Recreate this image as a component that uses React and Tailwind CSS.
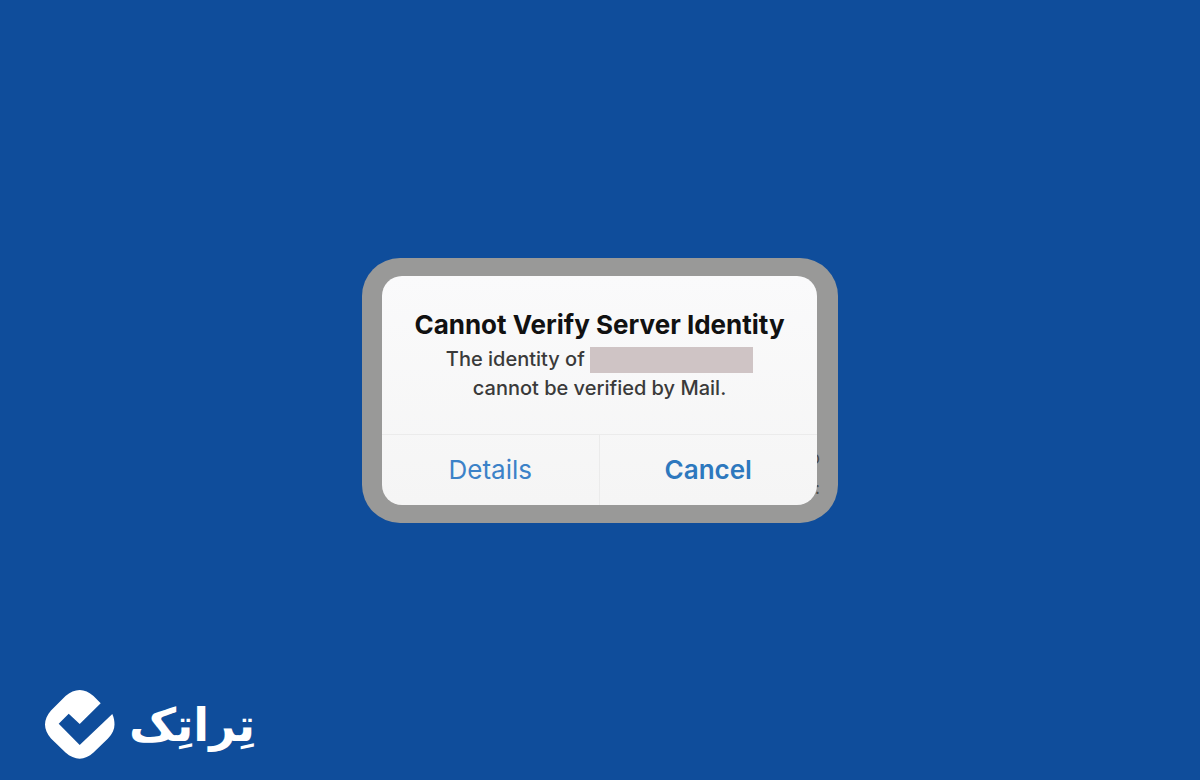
import React from 'react'

function LogoMark() {
    return (
        <svg viewBox="0 0 70 70" className="w-[70px] h-[70px]" fill="#ffffff" aria-hidden="true">
            <path d="M55.700 13.300L48.500 6C44 2 39.500 0 34.700 0C30 0 25 2 20.500 6L6 20.500C2 25 0 30 0 34.500C0 39 2 44 6 48.500L20.500 62.500C25 66.500 30 68.700 34.700 68.700C39.500 68.700 44 66.500 48.500 62.500L63 48.500C67.500 44 69.500 39 69.500 34.500C69.500 31 69 28 67.300 24L34.700 55L13.700 33.700L23.700 23.700L34.700 34Z" />
        </svg>
    )
}

function AlertDialog() {
    return (
        <div className="relative isolate w-full max-w-[476px] overflow-hidden rounded-[38px] bg-[#999998] py-[18px] pr-[21px] pl-5">
            {/* Text of the dimmed page that shows past the card */}
            <div className="absolute right-[18px] bottom-5 -z-10 flex flex-col text-right font-['Inter',sans-serif] text-[17px] leading-[30px] text-[#4b4b4b]" aria-hidden="true">
                <span>o</span>
                <span>:</span>
            </div>

            <div
                role="alertdialog"
                aria-labelledby="alert-title"
                aria-describedby="alert-text"
                className="overflow-hidden rounded-[20px] bg-linear-to-b from-[#fafafb] to-[#f5f5f5] text-center font-['Inter',sans-serif]"
            >
                <div className="px-4 py-[31px]">
                    <h1 id="alert-title" className="mb-0.5 text-[26px] leading-9 font-bold text-[#111111]">
                        Cannot Verify Server Identity
                    </h1>
                    <p id="alert-text" className="text-[20px] leading-[29px] font-medium text-[#3a3a3a]">
                        The identity of{' '}
                        <span className="inline-block h-[26px] w-[163px] bg-[#cfc4c5] align-middle" />
                        <br />
                        cannot be verified by Mail.
                    </p>
                </div>

                <div className="grid grid-cols-2 border-t border-[#ebebeb] text-[26px]">
                    <button type="button" className="h-[70px] border-r border-[#ebebeb] text-[#3b82c8]">
                        Details
                    </button>
                    <button type="button" className="h-[70px] font-semibold text-[#2d78be]">
                        Cancel
                    </button>
                </div>
            </div>
        </div>
    )
}

function App() {
    return (
        <div className="grid min-h-screen grid-rows-[1fr_auto_1fr] bg-[#0f4d9b]">
            <main className="row-start-2 flex justify-center px-4">
                <AlertDialog />
            </main>

            <footer className="row-start-3 flex items-center gap-3.5 self-end px-[45px] pb-5">
                <LogoMark />
                <span lang="fa" dir="rtl" className="font-['DejaVu_Sans',sans-serif] text-[46px] leading-[70px] font-bold text-white">
                    تِراتِک
                </span>
            </footer>
        </div>
    )
}

export default App
